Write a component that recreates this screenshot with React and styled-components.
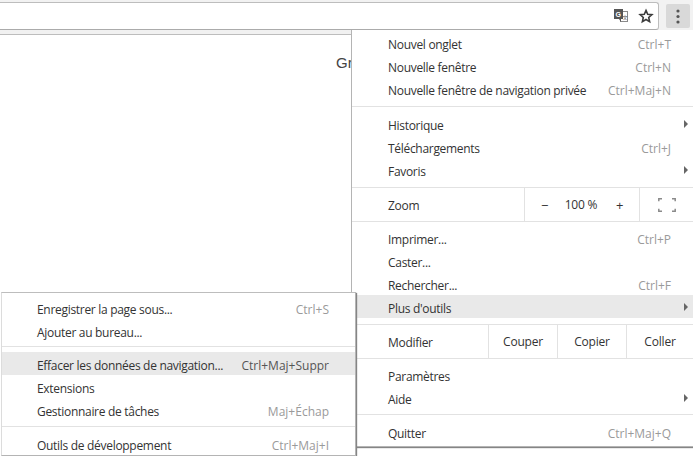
import React from 'react';
import styled, { createGlobalStyle } from 'styled-components';

const Global = createGlobalStyle`
  html, body { margin: 0; padding: 0; background: #fff; }
  body { width: 693px; height: 456px; overflow: hidden; font-family: "Open Sans", "Noto Sans", sans-serif; }
`;
const Page = styled.div`
  position: relative; width: 693px; height: 456px; overflow: hidden; background: #fff;
  display: flex; flex-direction: column;
`;
const Toolbar = styled.div`
  height: 30px; flex: none; display: flex; align-items: flex-start; background: #f2f2f2; padding-top: 2px; box-sizing: border-box;
`;
const Omnibox = styled.div`
  flex: 1; height: 28px; box-sizing: border-box; background: #fff;
  border: 1px solid #bdbdbd; border-left: none; border-bottom-color: #ababab; border-radius: 0 3px 3px 0;
  display: flex; align-items: center; justify-content: flex-end; gap: 9px; padding-right: 4px;
`;
const IconSlot = styled.div`width: 16px; height: 16px; display: flex;`;
const MenuButton = styled.div`
  width: 24px; height: 24px; margin: 2px 3px 0 7px; background: #d9d9d9; border-radius: 2px;
  display: flex; align-items: center; justify-content: center;
`;
const Strip = styled.div`
  height: 5px; flex: none; background: #f1f1f1; border-bottom: 1px solid #bdbdbd; box-sizing: border-box;
`;
const Content = styled.div`
  flex: 1; padding: 19px 0 0 336px; font-family: "Liberation Sans", sans-serif; font-size: 15px; color: #444; line-height: 18px; white-space: nowrap;
`;
const Menu = styled.div`
  position: absolute; background: #fff; box-sizing: border-box; color: #333; font-size: 12px;
  left: ${p => p.$left}px; top: ${p => p.$top}px; width: ${p => p.$width}px;
  border: 1px solid #b4b4b4; border-top: ${p => p.$topBorder};
  border-left-color: ${p => p.$leftColor};
  padding: ${p => p.$pad};
  box-shadow: 1px 1px 1px #858585;
`;
const Row = styled.div`
  height: 23px; display: flex; align-items: center; justify-content: space-between; box-sizing: border-box;
  padding: 4px ${p => (p.$arrow ? 5 : p.$right)}px 0 ${p => p.$indent}px; white-space: nowrap;
  background: ${p => (p.$hot ? '#e9e9e9' : 'transparent')};
`;
const Label = styled.span`letter-spacing: -0.3px;`;
const Hint = styled.span`color: ${p => (p.$hot ? '#555' : '#9a9a9a')};`;
const Arrow = styled.span`
  width: 0; height: 0; margin-top: -4px; border-left: 4px solid #666; border-top: 4px solid transparent; border-bottom: 4px solid transparent;
`;
const Sep = styled.div`height: 1px; background: #e2e2e2; margin: ${p => p.$m};`;
const ToolRow = styled.div`
  height: 35px; margin: 6px 0 4px; display: flex; align-items: center; padding-left: 36px; white-space: nowrap;
  border-top: 1px solid #e2e2e2; border-bottom: 1px solid #e2e2e2; box-sizing: border-box;
`;
const ToolLabel = styled.span`flex: 1; letter-spacing: -0.3px; padding-top: 2px;`;
const Cell = styled.div`
  width: ${p => p.$w}px; height: 100%; border-left: 1px solid #e2e2e2; box-sizing: border-box; letter-spacing: -0.2px;
  display: flex; align-items: center; justify-content: center;
`;
const ZoomCell = styled(Cell)`
  justify-content: flex-start; padding-left: 16px; gap: 13px;
`;
const ZoomBtn = styled.span`font-size: 13px; width: 7px; text-align: center;`;
const ZoomValue = styled.span`width: 40px; text-align: center; margin-right: 2px;`;

const Translate = () => (
  <svg width="16" height="16" viewBox="0 0 16 16">
    <rect x="7.5" y="3.5" width="7" height="10" fill="#fff" stroke="#8a8a8a" />
    <rect x="1" y="1" width="9" height="10" fill="#555" />
    <path d="M6 11l2 3v-3z" fill="#555" />
    <text x="2.5" y="8.5" fontSize="7" fontFamily="Liberation Sans" fontWeight="700" fill="#fff">G</text>
    <text x="9.5" y="11" fontSize="5" fontFamily="Noto Sans CJK SC" fill="#555">文</text>
  </svg>
);
const Star = () => (
  <svg width="16" height="16" viewBox="0 0 16 16">
    <path d="M8 2.4l1.7 3.9 4.2.4-3.2 2.8.9 4.1L8 11.5l-3.6 2.1.9-4.1-3.2-2.8 4.2-.4z" fill="none" stroke="#3c3c3c" strokeWidth="1.6" />
  </svg>
);
const Dots = () => (
  <svg width="4" height="15" viewBox="0 0 4 15">
    <circle cx="2" cy="2" r="1.6" fill="#555" /><circle cx="2" cy="7.5" r="1.6" fill="#555" /><circle cx="2" cy="13" r="1.6" fill="#555" />
  </svg>
);
const Fullscreen = () => (
  <svg width="18" height="14" viewBox="0 0 18 14">
    <path d="M.8 3.2V.8h3.2M14 .8h3.2v2.4M.8 10.8v2.4h3.2M14 13.2h3.2v-2.4" fill="none" stroke="#8a8a8a" strokeWidth="1.5" />
  </svg>
);

const Item = ({ label, hint, arrow, hot, indent = 36, right = 22 }) => (
  <Row $arrow={arrow} $hot={hot} $indent={indent} $right={right}>
    <Label>{label}</Label>
    {arrow ? <Arrow /> : hint ? <Hint $hot={hot}>{hint}</Hint> : null}
  </Row>
);
const Sub = props => <Item indent={35} right={26} {...props} />;

export default function App() {
  return (
    <Page>
      <Global />
      <Toolbar>
        <Omnibox>
          <IconSlot><Translate /></IconSlot>
          <IconSlot><Star /></IconSlot>
        </Omnibox>
        <MenuButton><Dots /></MenuButton>
      </Toolbar>
      <Strip />
      <Content>Gr</Content>
      <Menu $left={351} $top={30} $width={343} $pad="1px 0 3px" $topBorder="none" $leftColor="#b4b4b4">
        <Item label="Nouvel onglet" hint="Ctrl+T" />
        <Item label="Nouvelle fenêtre" hint="Ctrl+N" />
        <Item label="Nouvelle fenêtre de navigation privée" hint="Ctrl+Maj+N" />
        <Sep $m="6px 0 5px" />
        <Item label="Historique" arrow />
        <Item label="Téléchargements" hint="Ctrl+J" />
        <Item label="Favoris" arrow />
        <ToolRow>
          <ToolLabel>Zoom</ToolLabel>
          <ZoomCell $w={115}>
            <ZoomBtn>−</ZoomBtn><ZoomValue>100 %</ZoomValue><ZoomBtn>+</ZoomBtn>
          </ZoomCell>
          <Cell $w={54}><Fullscreen /></Cell>
        </ToolRow>
        <Item label="Imprimer..." hint="Ctrl+P" />
        <Item label="Caster..." />
        <Item label="Rechercher..." hint="Ctrl+F" />
        <Item label="Plus d'outils" arrow hot />
        <ToolRow>
          <ToolLabel>Modifier</ToolLabel>
          <Cell $w={69}>Couper</Cell>
          <Cell $w={69}>Copier</Cell>
          <Cell $w={67}>Coller</Cell>
        </ToolRow>
        <Item label="Paramètres" />
        <Item label="Aide" arrow />
        <Sep $m="5px 0" />
        <Item label="Quitter" hint="Ctrl+Maj+Q" />
      </Menu>
      <Menu $left={1} $top={292} $width={355} $pad="3px 0 0" $topBorder="1px solid #bdbdbd" $leftColor="#dcdcdc">
        <Sub label="Enregistrer la page sous..." hint="Ctrl+S" />
        <Sub label="Ajouter au bureau..." />
        <Sep $m="4px 0 5px" />
        <Sub label="Effacer les données de navigation..." hint="Ctrl+Maj+Suppr" hot />
        <Sub label="Extensions" />
        <Sub label="Gestionnaire de tâches" hint="Maj+Échap" />
        <Sep $m="5px 0" />
        <Sub label="Outils de développement" hint="Ctrl+Maj+I" />
      </Menu>
    </Page>
  );
}
